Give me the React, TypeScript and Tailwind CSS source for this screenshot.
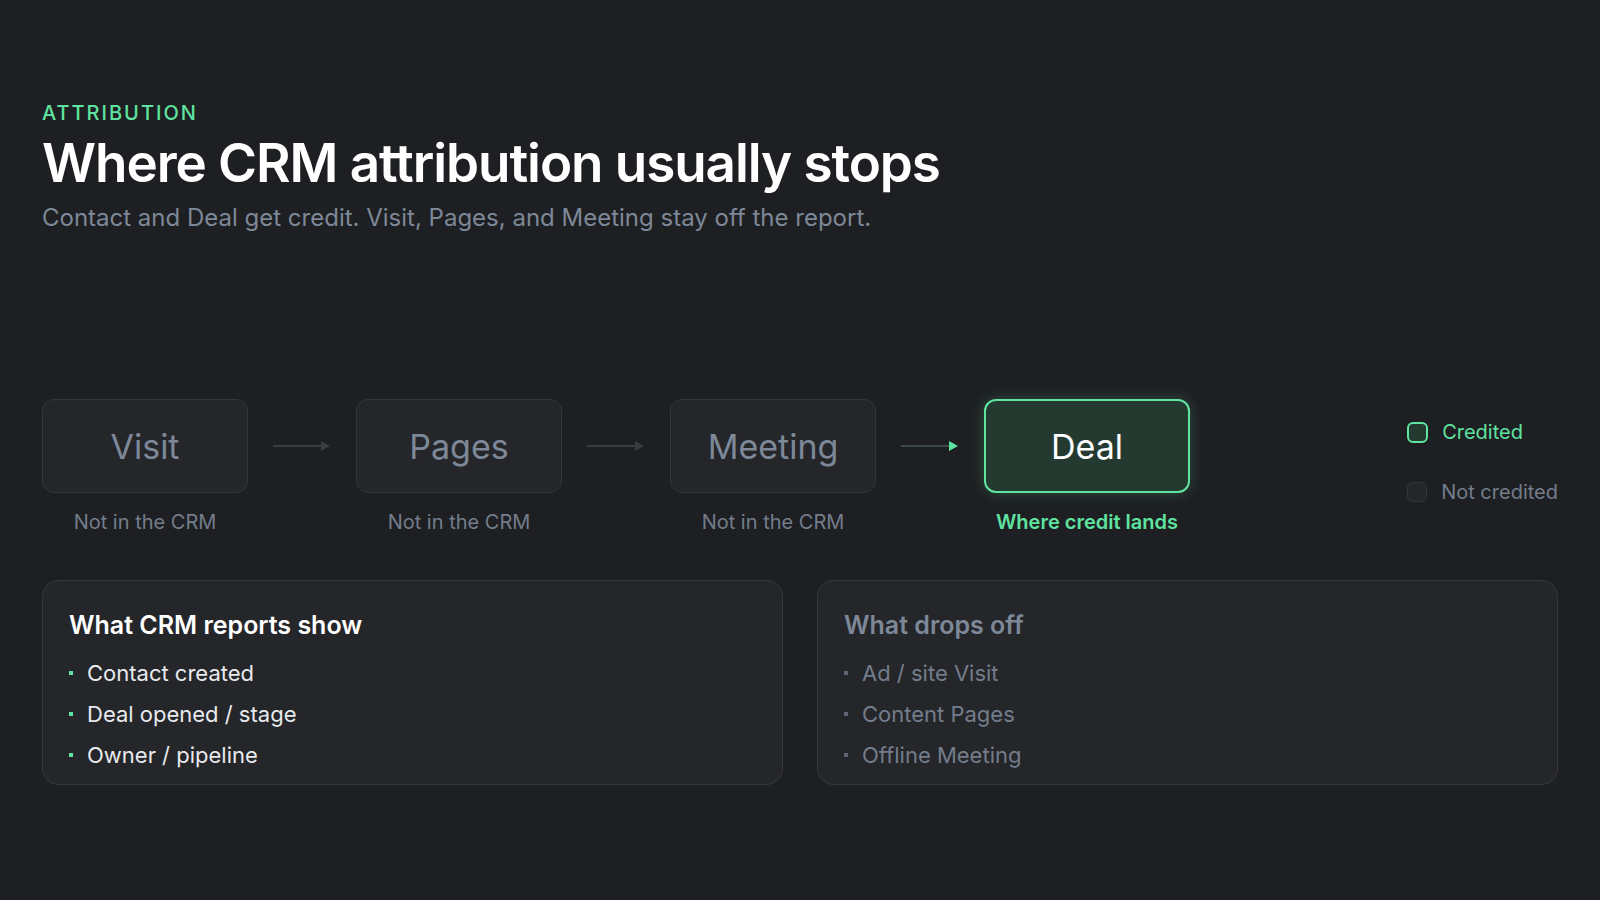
import React from "react";

const font = { fontFamily: "Inter, 'Noto Sans', sans-serif" };

function Arrow({ green }: { green?: boolean }) {
  return (
    <svg width="58" height="12" viewBox="0 0 58 12" className="shrink-0">
      <line x1="0" y1="6" x2="50" y2="6" stroke={green ? "#3c4a44" : "#3a3c41"} strokeWidth="2" />
      <polygon points="48,1 57,6 48,11" fill={green ? "#5ee3a0" : "#3a3c41"} />
    </svg>
  );
}

function Step({ label, sub, active }: { label: string; sub: string; active?: boolean }) {
  return (
    <div className="flex flex-col items-center w-[206px] shrink-0">
      <div
        className={
          active
            ? "w-full h-[94px] rounded-[12px] border-2 border-[#5ee3a0] bg-[#243a31] flex items-center justify-center text-[34px] text-white shadow-[0_0_14px_rgba(94,227,160,0.25)]"
            : "w-full h-[94px] rounded-[12px] border border-[#34363b] bg-[#25262a] flex items-center justify-center text-[34px] text-[#7d8898]"
        }
      >
        {label}
      </div>
      <div className={active ? "mt-[14px] text-[20px] font-semibold text-[#5ee3a0]" : "mt-[14px] text-[20px] text-[#737d8b]"}>{sub}</div>
    </div>
  );
}

function Card({ title, items, dim }: { title: string; items: string[]; dim?: boolean }) {
  return (
    <div className="flex-1 h-[205px] rounded-[16px] border border-[#34363b] bg-[#25262a] px-[26px] pt-[26px]">
      <div className={dim ? "text-[25px] font-semibold text-[#7d8898]" : "text-[25px] font-semibold text-white"}>{title}</div>
      <div className="mt-[12px] flex flex-col gap-[8px]">
        {items.map((t) => (
          <div key={t} className="flex items-center gap-[14px] text-[22px]">
            <span className={dim ? "w-[4px] h-[4px] bg-[#5d6672]" : "w-[4px] h-[4px] bg-[#5ee3a0]"} />
            <span className={dim ? "text-[#737d8b]" : "text-[#e8eaee]"}>{t}</span>
          </div>
        ))}
      </div>
    </div>
  );
}

export default function App() {
  return (
    <div style={font} className="w-[1600px] h-[900px] bg-[#1e1f22] px-[42px] pt-[98px] overflow-hidden">
      <div className="text-[20px] tracking-[0.1em] font-medium text-[#5ee3a0]">ATTRIBUTION</div>
      <h1 className="mt-[2px] text-[53px] font-semibold tracking-[-0.02em] text-white leading-[1.25]">Where CRM attribution usually stops</h1>
      <p className="mt-[4px] text-[24px] text-[#7d8898]">Contact and Deal get credit. Visit, Pages, and Meeting stay off the report.</p>

      <div className="mt-[163px] flex items-start">
        <div className="flex items-start">
          <Step label="Visit" sub="Not in the CRM" />
          <div className="h-[94px] flex items-center px-[25px]"><Arrow /></div>
          <Step label="Pages" sub="Not in the CRM" />
          <div className="h-[94px] flex items-center px-[25px]"><Arrow /></div>
          <Step label="Meeting" sub="Not in the CRM" />
          <div className="h-[94px] flex items-center px-[25px]"><Arrow green /></div>
          <Step label="Deal" sub="Where credit lands" active />
        </div>
        <div className="ml-auto pt-[18px] flex flex-col gap-[30px] text-[20px]">
          <div className="flex items-center gap-[14px] text-[#5ee3a0]">
            <span className="w-[21px] h-[21px] rounded-[6px] border-2 border-[#5ee3a0] bg-[#243a31]" />
            Credited
          </div>
          <div className="flex items-center gap-[14px] text-[#737d8b]">
            <span className="w-[20px] h-[20px] rounded-[6px] border border-[#34363b] bg-[#25262a]" />
            Not credited
          </div>
        </div>
      </div>

      <div className="mt-[43px] flex gap-[34px]">
        <Card title="What CRM reports show" items={["Contact created", "Deal opened / stage", "Owner / pipeline"]} />
        <Card dim title="What drops off" items={["Ad / site Visit", "Content Pages", "Offline Meeting"]} />
      </div>
    </div>
  );
}
